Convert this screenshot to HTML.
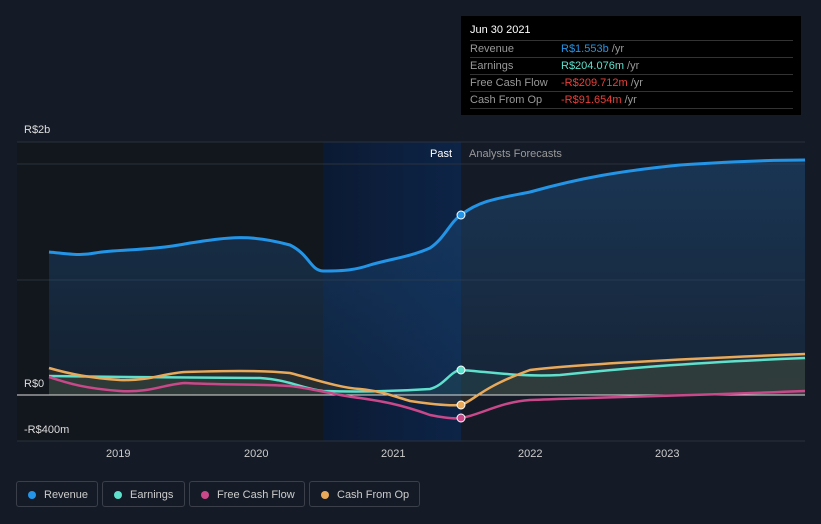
<!DOCTYPE html>
<html><head><style>
body{margin:0;background:#151b26;width:821px;height:524px;overflow:hidden;font-family:"Liberation Sans",sans-serif;position:relative}
.tt{position:absolute;left:461px;top:16px;width:340px;height:99px;background:#000;}
.tt .h{position:absolute;left:9px;top:8px;color:#fff;font-size:11px}
.row{position:absolute;left:9px;width:323px;border-top:1px solid #333;height:16px;font-size:11px;color:#999;line-height:16px}
.row span{position:absolute;left:91px}
.leg{position:absolute;top:481px;height:26px;border:1px solid #3a3f4a;border-radius:3px;color:#ccc;font-size:11px;line-height:26px;box-sizing:border-box}
.leg i{position:absolute;left:11px;top:9px;width:8px;height:8px;border-radius:50%}
.leg b{font-weight:normal;position:absolute;left:27px}
</style></head><body>
<svg width="821" height="524" style="position:absolute;left:0;top:0">
<defs>
<linearGradient id="hl" x1="0" x2="1"><stop offset="0" stop-color="#0b1a33"/><stop offset="1" stop-color="#0d2447"/></linearGradient>
<linearGradient id="rf" x1="0" y1="0" x2="0" y2="1"><stop offset="0" stop-color="#1d4a78" stop-opacity=".55"/><stop offset="1" stop-color="#1d4a78" stop-opacity=".2"/></linearGradient>
</defs>
<rect x="17" y="142" width="306" height="299" fill="#12161d"/>
<rect x="323" y="142" width="138" height="299" fill="url(#hl)"/>
<line x1="17" y1="142" x2="805" y2="142" stroke="#2b313c"/>
<line x1="17" y1="164" x2="805" y2="164" stroke="#2b313c"/>
<line x1="17" y1="280" x2="805" y2="280" stroke="#2b313c"/>
<line x1="17" y1="441" x2="805" y2="441" stroke="#2b313c"/>
<path d="M49,252 C70,254 80,256 95,253 C120,249 150,251 190,243 C230,237 250,234 290,245 C310,255 310,270 323,271 C345,271 355,270 370,265 C390,259 410,257 430,248 C445,238 450,222 461,215 C480,200 500,198 530,192 C580,178 620,171 680,165 C740,161 780,160 805,160 L805,395 L49,395 Z" fill="url(#rf)"/>
<path d="M49,376 C120,377 200,378 260,378 C290,380 300,388 323,391 C360,392 400,391 430,389 C445,385 450,371 461,370 C490,372 520,377 560,375 C620,369 680,363 805,358 L805,395 L49,395Z" fill="#2a5a5a" opacity=".35"/>
<path d="M49,368 C70,374 90,378 120,380 C150,381 165,373 185,372 C220,371 260,370 290,373 C310,378 340,388 360,389 C380,391 390,395 410,401 C430,404 450,406 461,405 C475,400 480,388 530,370 C580,364 680,359 805,354 L805,395 L49,395Z" fill="#5a4a2a" opacity=".3"/>
<line x1="17" y1="395" x2="805" y2="395" stroke="#ddd" stroke-width="1"/>
<path d="M49,376 C120,377 200,378 260,378 C290,380 300,388 323,391 C360,392 400,391 430,389 C445,385 450,371 461,370 C490,372 520,377 560,375 C620,369 680,363 805,358" fill="none" stroke="#5ee0cc" stroke-width="2.5"/>
<path d="M49,377 C65,382 80,388 120,391 C150,393 165,384 185,383 C220,385 260,384 290,386 C310,388 340,396 360,398 C380,401 400,404 430,415 C445,418 455,419 461,418 C480,415 500,402 530,400 C600,397 680,396 805,391" fill="none" stroke="#c9488a" stroke-width="2.5"/>
<path d="M49,368 C70,374 90,378 120,380 C150,381 165,373 185,372 C220,371 260,370 290,373 C310,378 340,388 360,389 C380,391 390,395 410,401 C430,404 450,406 461,405 C475,400 480,388 530,370 C580,364 680,359 805,354" fill="none" stroke="#e8aa5a" stroke-width="2.5"/>
<path d="M49,252 C70,254 80,256 95,253 C120,249 150,251 190,243 C230,237 250,234 290,245 C310,255 310,270 323,271 C345,271 355,270 370,265 C390,259 410,257 430,248 C445,238 450,222 461,215 C480,200 500,198 530,192 C580,178 620,171 680,165 C740,161 780,160 805,160" fill="none" stroke="#2394e6" stroke-width="3"/>
<circle cx="461" cy="215" r="4" fill="#2394e6" stroke="#fff" stroke-width="1"/>
<circle cx="461" cy="370" r="4" fill="#5ee0cc" stroke="#fff" stroke-width="1"/>
<circle cx="461" cy="405" r="4" fill="#e8aa5a" stroke="#fff" stroke-width="1"/>
<circle cx="461" cy="418" r="4" fill="#c9488a" stroke="#fff" stroke-width="1"/>
<g font-size="11" fill="#ddd" font-family="Liberation Sans">
<text x="24" y="133">R$2b</text><text x="24" y="387">R$0</text><text x="24" y="433">-R$400m</text>
<text x="106" y="457" fill="#ccc">2019</text><text x="244" y="457" fill="#ccc">2020</text><text x="381" y="457" fill="#ccc">2021</text><text x="518" y="457" fill="#ccc">2022</text><text x="655" y="457" fill="#ccc">2023</text>
<text x="430" y="157" fill="#fff">Past</text><text x="469" y="157" fill="#999">Analysts Forecasts</text>
</g>
</svg>
<div class="tt"><div class="h">Jun 30 2021</div>
<div class="row" style="top:24px">Revenue<span><a style="color:#2394e6">R$1.553b</a> /yr</span></div>
<div class="row" style="top:41px">Earnings<span><a style="color:#5ee0cc">R$204.076m</a> /yr</span></div>
<div class="row" style="top:58px">Free Cash Flow<span><a style="color:#e8403a">-R$209.712m</a> /yr</span></div>
<div class="row" style="top:75px;border-bottom:1px solid #333">Cash From Op<span><a style="color:#e8403a">-R$91.654m</a> /yr</span></div>
</div>
<div class="leg" style="left:16px;width:82px"><i style="background:#2394e6"></i><b>Revenue</b></div>
<div class="leg" style="left:102px;width:83px"><i style="background:#5ee0cc"></i><b>Earnings</b></div>
<div class="leg" style="left:189px;width:116px"><i style="background:#c9488a"></i><b>Free Cash Flow</b></div>
<div class="leg" style="left:309px;width:111px"><i style="background:#e8aa5a"></i><b>Cash From Op</b></div>
</body></html>
